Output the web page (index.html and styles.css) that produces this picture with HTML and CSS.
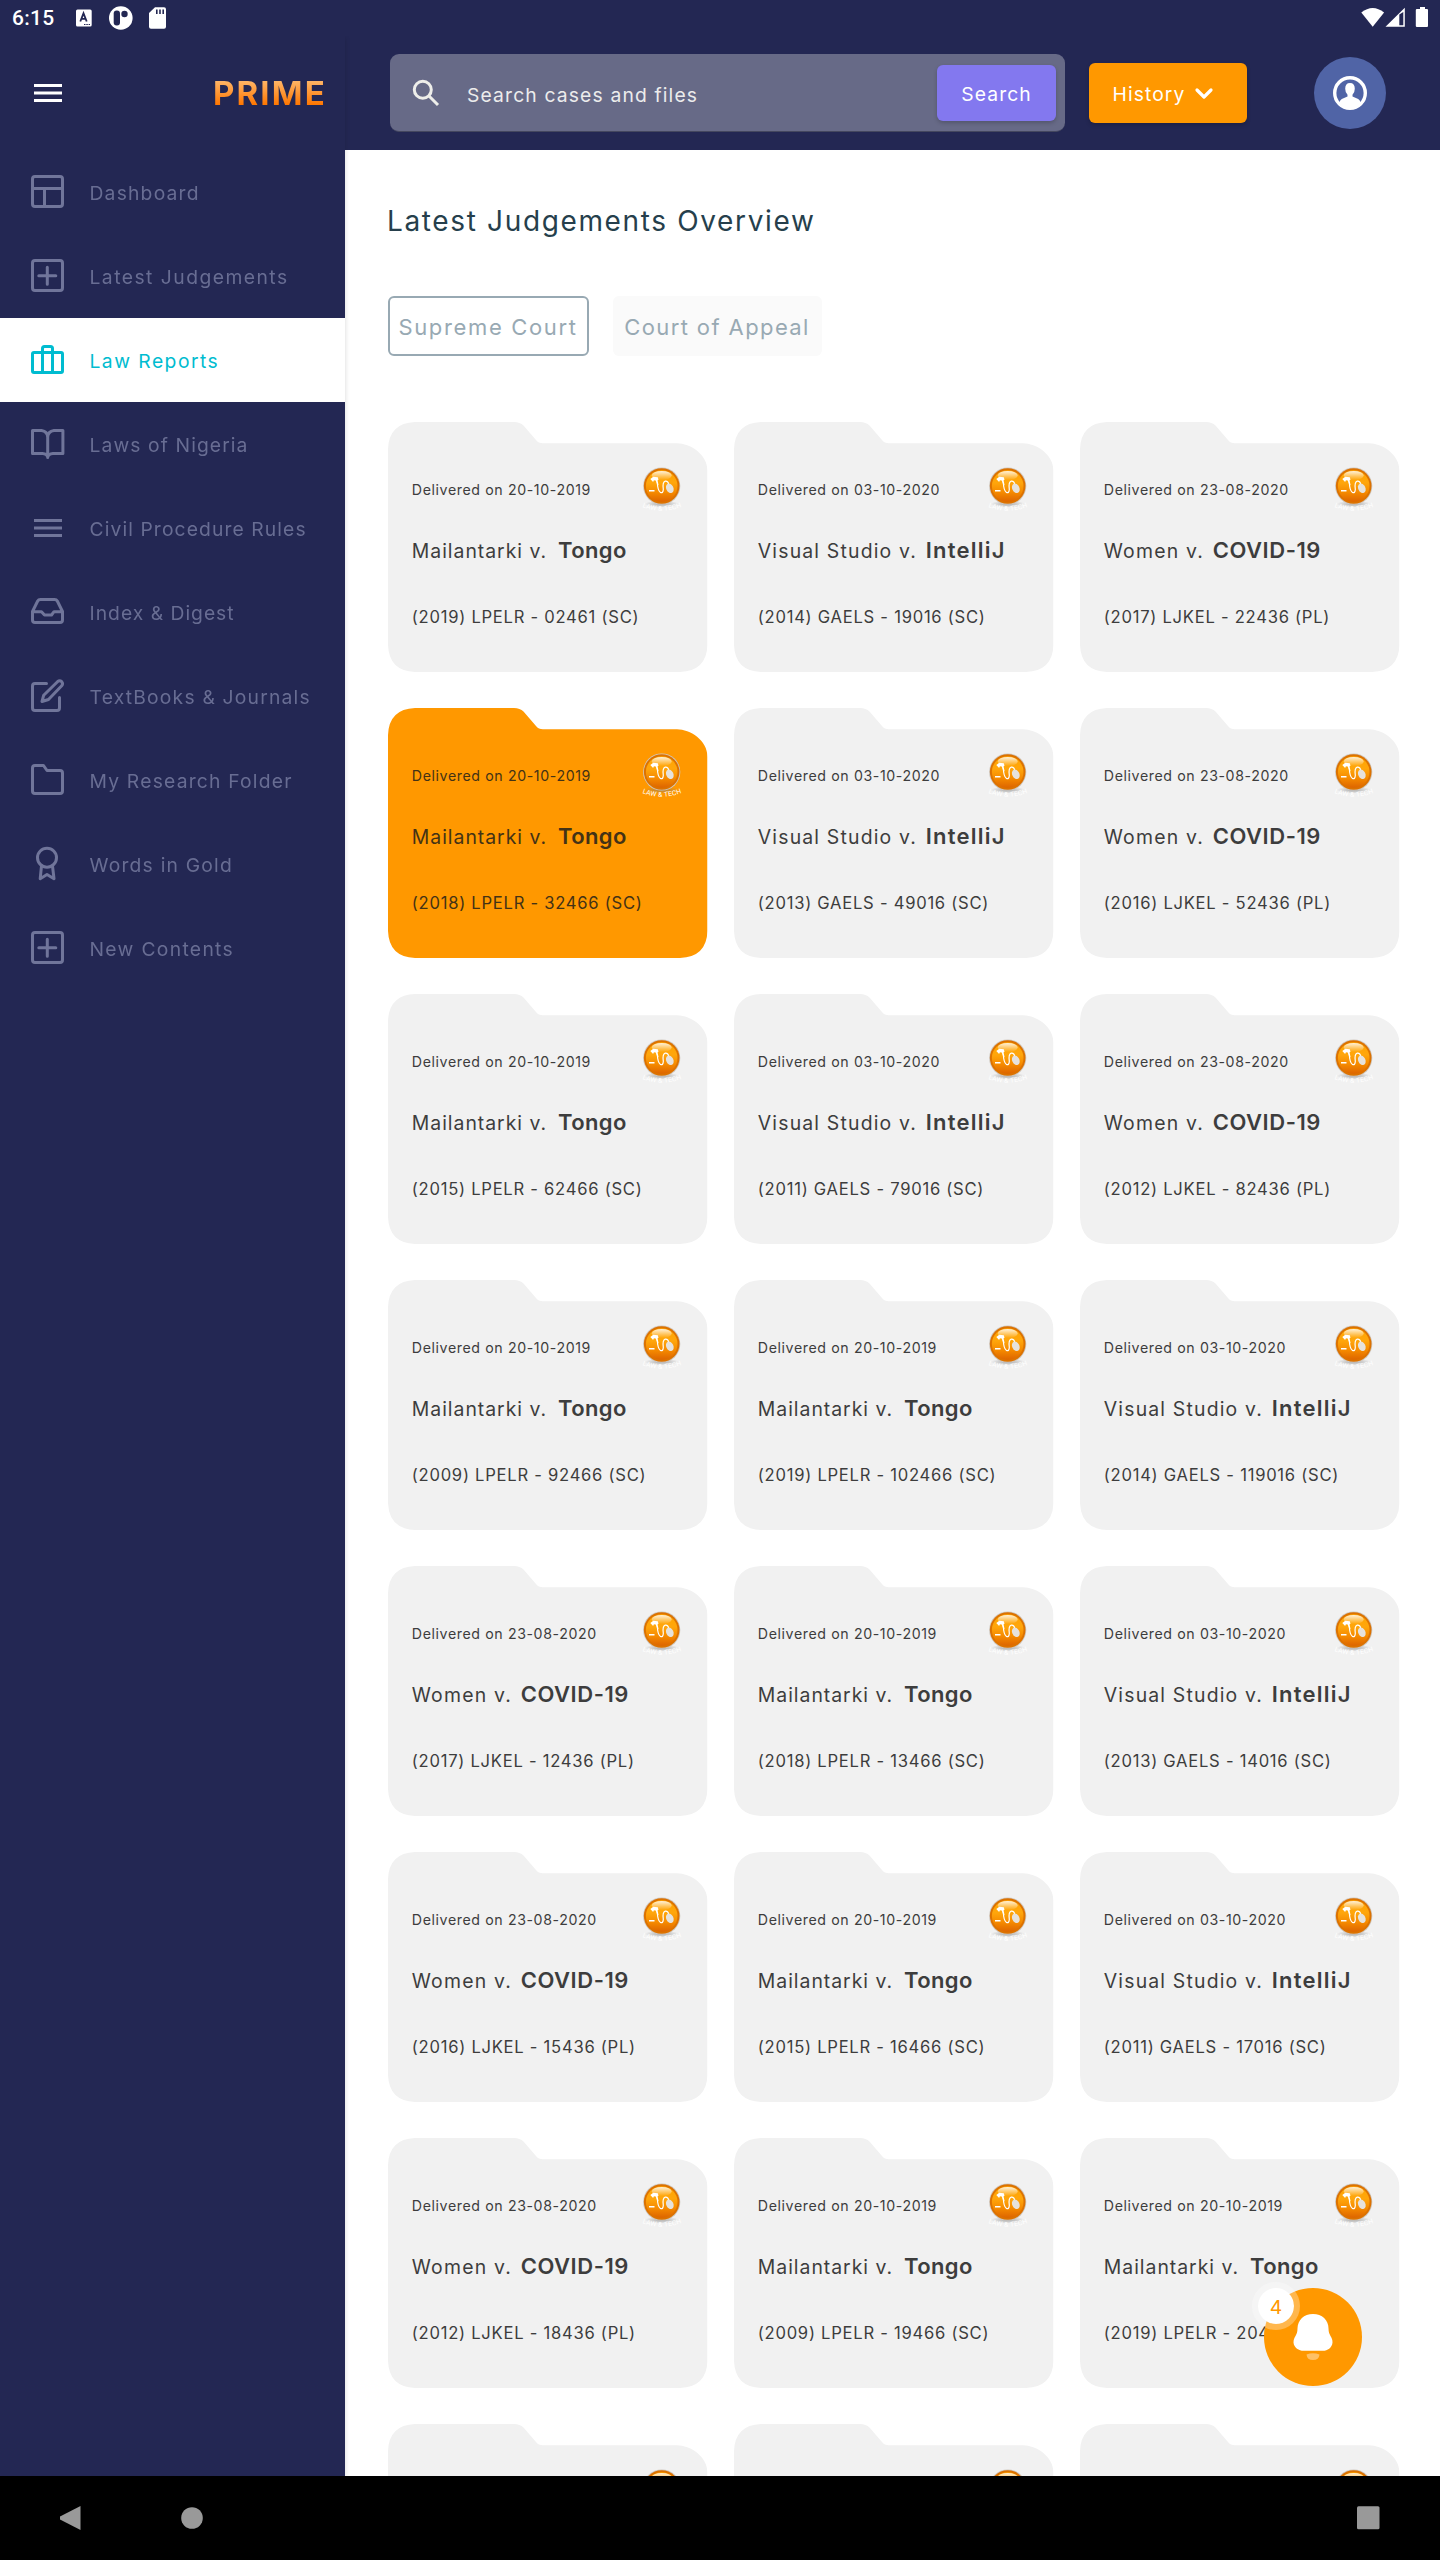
FILE: index.html
```html
<!DOCTYPE html>
<html lang="en">
<head>
<meta charset="utf-8">
<title>Prime – Law Reports</title>
<link rel="stylesheet" href="styles.css">
</head>
<body>
<svg class="defs" width="0" height="0" aria-hidden="true">
  <defs>
    <linearGradient id="orb" x1="0" y1="0" x2="0" y2="1">
      <stop offset="0" stop-color="#ffa500"/><stop offset=".4" stop-color="#ffa60c"/><stop offset=".7" stop-color="#f58a00"/><stop offset="1" stop-color="#dd6500"/>
    </linearGradient>
    <linearGradient id="gloss" x1="0" y1="0" x2="0" y2="1">
      <stop offset="0" stop-color="#fff" stop-opacity=".85"/><stop offset="1" stop-color="#fff" stop-opacity="0"/>
    </linearGradient>
    <radialGradient id="shade"><stop offset="0" stop-color="#777" stop-opacity=".6"/><stop offset="1" stop-color="#777" stop-opacity="0"/></radialGradient>
    <path id="arc" d="M1 40.5Q21.7 49 43 40.5"/>
  </defs>
  <symbol id="folder" viewBox="0 0 319.5 250">
    <path d="M27 0H126Q132 0 135.500 3.500L148 18Q150.500 21.300 155 21.300H289C302 21.500 319.500 32 319.500 49V223Q318.500 249 292 250H27Q1 249 0 223V27Q1 1 27 0Z"/>
  </symbol>
  <symbol id="logo" viewBox="0 0 44 48">
    <ellipse cx="21.700" cy="38" rx="17" ry="3.500" fill="url(#shade)"/>
    <circle cx="21.700" cy="20" r="18.600" fill="#cfc8c0"/>
    <circle cx="21.700" cy="20" r="17.800" fill="#dc7200"/>
    <circle cx="21.700" cy="20" r="15.800" fill="url(#orb)"/>
    <ellipse cx="21.700" cy="9.500" rx="10" ry="4.500" fill="url(#gloss)"/>
    <path d="M10.300 13l3-2.300 4.500.5.700 2.500-2.200 1.500-1.200-1-1.300.3-.7 1.500zM9 24h5.500v1.600H9zM15.500 14l2 0 1 5-1 .5z" fill="#fff"/>
    <path d="M17.300 16q.3 8.500 3.200 10.500 2.500 1 2.800-3-1-7.500 1.900-8.300 3-.3 3.600 3.500" fill="none" stroke="#fff" stroke-width="1.200"/>
    <ellipse cx="29.800" cy="22.300" rx="3.600" ry="5" transform="rotate(-25 29.800 22.300)" fill="#e6e2dc"/>
    <text class="logo-text"><textPath href="#arc" startOffset="50%" text-anchor="middle">LAW &amp; TECH</textPath></text>
  </symbol>
  <symbol id="plus" viewBox="0 0 40 40"><rect x="5.500" y="4.500" width="30" height="30" rx="2.500"/><path d="M11.800 19.700h17M20.300 11.200v17"/></symbol>
</svg>

<div class="status">
  <span class="clock">6:15</span>
  <svg class="status-left" width="96" height="36" viewBox="73 0 96 36">
    <rect x="76" y="9.500" width="15.700" height="17" rx="1.500" fill="#fff"/>
    <path d="M80.300 21.500l3.200-8.200 3.200 8.200M81.500 18.800h4" fill="none" stroke="#232753" stroke-width="1.800"/>
    <path d="M84 24.500h6" stroke="#232753" stroke-width="1.200" stroke-dasharray="1.500 .8"/>
    <circle cx="120.800" cy="18" r="11.800" fill="#fff"/>
    <rect x="113.700" y="10.500" width="6.300" height="15" rx="3" fill="#232753"/><circle cx="124.500" cy="14" r="3.200" fill="#232753"/>
    <path d="M155 7.300h9q2 0 2 2v17.500q0 2-2 2h-13q-2 0-2-2V13z" fill="#fff"/>
    <path d="M156.800 9.500v4.500M160 9.500v4.500M163.200 9.500v4.500" stroke="#232753" stroke-width="1.600"/>
  </svg>
  <svg class="status-right" width="70" height="36" viewBox="1360 0 70 36" fill="#fff">
    <path d="M1372.700 26.700l-11.400-14.200q11.400-9 22.800 0z"/>
    <path d="M1385.500 26.800l19.300-19v19zM1399.300 14.500v10.800h4V12z" fill-rule="evenodd"/>
    <path d="M1417 9h3V7h5v2h2q1 0 1 1v16q0 1-1 1h-10q-1.200 0-1.200-1V10q0-1 1.200-1z"/>
  </svg>
</div>

<div class="app">
  <aside class="sidebar">
    <div class="brand">
      <svg class="icon" viewBox="0 0 40 40"><path d="M7 12.500h28M7 20h28M7 27.500h28"/></svg>
      <span class="wordmark">PRIME</span>
    </div>
    <nav>
      <a class="item"><svg class="icon" viewBox="0 0 40 40"><rect x="5.500" y="4.500" width="30" height="30" rx="2.500"/><path d="M5.500 16.500h30M17.500 16.500v18"/></svg><span>Dashboard</span></a>
      <a class="item loose"><svg class="icon"><use href="#plus"/></svg><span>Latest Judgements</span></a>
      <a class="item loose active"><svg class="icon" viewBox="0 0 40 40"><rect x="5.500" y="12.500" width="30" height="20" rx="1.500"/><path d="M15.500 32V8.500q0-2 2-2h6q2 0 2 2V32"/></svg><span>Law Reports</span></a>
      <a class="item snug"><svg class="icon" viewBox="0 0 40 40"><path d="M20.700 13v20.500M5.500 6.500h9q6 1 6.200 6.500.2-5.500 6.200-6.500h9v23h-10q-4.500.3-5.200 3.500-.7-3.200-5.200-3.500h-10z"/></svg><span>Laws of Nigeria</span></a>
      <a class="item snug"><svg class="icon" viewBox="0 0 40 40"><path stroke-linecap="butt" d="M7 12.500h28M7 20h28M7 27.500h28"/></svg><span>Civil Procedure Rules</span></a>
      <a class="item tight"><svg class="icon" viewBox="0 0 40 40"><path d="M35.500 19.700h-8.500l-2.500 3.300h-7l-3-3.300h-9M13.500 7.500h14q2 0 2.800 1.500l5.200 10.500v8.500q0 2.500-2.500 2.500h-25q-2.500 0-2.500-2.500v-8.500l5.200-10.500q.8-1.500 2.800-1.500z"/></svg><span>Index &amp; Digest</span></a>
      <a class="item"><svg class="icon" viewBox="0 0 40 40"><path d="M19.500 7.500H8q-2.500 0-2.500 2.500v22q0 2.500 2.500 2.500h22q2.500 0 2.500-2.500V21.500M30.500 5.700q2.200-1.900 4.200 0 1.700 2 0 4.100L21.500 23.500l-6.500 2 1.700-6.300z"/></svg><span>TextBooks &amp; Journals</span></a>
      <a class="item"><svg class="icon" viewBox="0 0 40 40"><path d="M8 5.500h8.500l3.500 5h13q2.500 0 2.500 2.500v18q0 2.500-2.500 2.500H8q-2.500 0-2.500-2.500V8q0-2.500 2.500-2.500z"/></svg><span>My Research Folder</span></a>
      <a class="item"><svg class="icon" viewBox="0 0 40 40"><circle cx="20" cy="13.700" r="9.500"/><path d="M14.500 22l-1.300 12.700 6.800-4.200 7 4.200L25.500 22"/></svg><span>Words in Gold</span></a>
      <a class="item mid"><svg class="icon"><use href="#plus"/></svg><span>New Contents</span></a>
    </nav>
  </aside>

  <div class="main">
    <header class="topbar">
      <div class="search">
        <svg width="28" height="28" viewBox="0 0 28 28" fill="none" stroke="#eeeeea" stroke-width="3"><circle cx="10.800" cy="10.800" r="8.500"/><path d="M16.500 16.500l9.500 9.500"/></svg>
        <span class="placeholder">Search cases and files</span>
        <button class="btn search-btn">Search</button>
      </div>
      <button class="btn history">History
        <svg width="20" height="14" viewBox="0 0 20 14" fill="none" stroke="#fff" stroke-width="3.200" stroke-linecap="round" stroke-linejoin="round"><path d="M3 3l7 7 7-7"/></svg>
      </button>
      <div class="avatar">
        <svg width="34" height="34" viewBox="0 0 34 34"><circle cx="17" cy="17" r="15.300" fill="none" stroke="#fff" stroke-width="3.400"/><path d="M12.200 12.800q0-5.800 4.800-5.800t4.800 5.800q0 3.700-2.300 6v1.700l5.700 2.500q2 1 2.300 3.500Q23 32 17 32T6.500 26.500q.3-2.500 2.300-3.500l5.700-2.500v-1.700q-2.300-2.300-2.300-6z" fill="#fff"/></svg>
      </div>
    </header>

    <main class="content">
      <h1>Latest Judgements Overview</h1>
      <div class="tabs"><span class="tab current">Supreme Court</span><span class="tab appeal">Court of Appeal</span></div>
      <div class="cards">
        <article class="card tongo"><svg class="shape"><use href="#folder"/></svg><div class="head"><time>Delivered on 20-10-2019</time><svg class="logo"><use href="#logo"/></svg></div><h2>Mailantarki v. <b>Tongo</b></h2><p>(2019) LPELR - 02461 (SC)</p></article>
        <article class="card studio"><svg class="shape"><use href="#folder"/></svg><div class="head"><time>Delivered on 03-10-2020</time><svg class="logo"><use href="#logo"/></svg></div><h2>Visual Studio v. <b>IntelliJ</b></h2><p>(2014) GAELS - 19016 (SC)</p></article>
        <article class="card covid"><svg class="shape"><use href="#folder"/></svg><div class="head"><time>Delivered on 23-08-2020</time><svg class="logo"><use href="#logo"/></svg></div><h2>Women v. <b>COVID-19</b></h2><p>(2017) LJKEL - 22436 (PL)</p></article>

        <article class="card tongo selected"><svg class="shape"><use href="#folder"/></svg><div class="head"><time>Delivered on 20-10-2019</time><svg class="logo"><use href="#logo"/></svg></div><h2>Mailantarki v. <b>Tongo</b></h2><p>(2018) LPELR - 32466 (SC)</p></article>
        <article class="card studio"><svg class="shape"><use href="#folder"/></svg><div class="head"><time>Delivered on 03-10-2020</time><svg class="logo"><use href="#logo"/></svg></div><h2>Visual Studio v. <b>IntelliJ</b></h2><p>(2013) GAELS - 49016 (SC)</p></article>
        <article class="card covid"><svg class="shape"><use href="#folder"/></svg><div class="head"><time>Delivered on 23-08-2020</time><svg class="logo"><use href="#logo"/></svg></div><h2>Women v. <b>COVID-19</b></h2><p>(2016) LJKEL - 52436 (PL)</p></article>

        <article class="card tongo"><svg class="shape"><use href="#folder"/></svg><div class="head"><time>Delivered on 20-10-2019</time><svg class="logo"><use href="#logo"/></svg></div><h2>Mailantarki v. <b>Tongo</b></h2><p>(2015) LPELR - 62466 (SC)</p></article>
        <article class="card studio"><svg class="shape"><use href="#folder"/></svg><div class="head"><time>Delivered on 03-10-2020</time><svg class="logo"><use href="#logo"/></svg></div><h2>Visual Studio v. <b>IntelliJ</b></h2><p>(2011) GAELS - 79016 (SC)</p></article>
        <article class="card covid"><svg class="shape"><use href="#folder"/></svg><div class="head"><time>Delivered on 23-08-2020</time><svg class="logo"><use href="#logo"/></svg></div><h2>Women v. <b>COVID-19</b></h2><p>(2012) LJKEL - 82436 (PL)</p></article>

        <article class="card tongo"><svg class="shape"><use href="#folder"/></svg><div class="head"><time>Delivered on 20-10-2019</time><svg class="logo"><use href="#logo"/></svg></div><h2>Mailantarki v. <b>Tongo</b></h2><p>(2009) LPELR - 92466 (SC)</p></article>
        <article class="card tongo"><svg class="shape"><use href="#folder"/></svg><div class="head"><time>Delivered on 20-10-2019</time><svg class="logo"><use href="#logo"/></svg></div><h2>Mailantarki v. <b>Tongo</b></h2><p>(2019) LPELR - 102466 (SC)</p></article>
        <article class="card studio"><svg class="shape"><use href="#folder"/></svg><div class="head"><time>Delivered on 03-10-2020</time><svg class="logo"><use href="#logo"/></svg></div><h2>Visual Studio v. <b>IntelliJ</b></h2><p>(2014) GAELS - 119016 (SC)</p></article>

        <article class="card covid"><svg class="shape"><use href="#folder"/></svg><div class="head"><time>Delivered on 23-08-2020</time><svg class="logo"><use href="#logo"/></svg></div><h2>Women v. <b>COVID-19</b></h2><p>(2017) LJKEL - 12436 (PL)</p></article>
        <article class="card tongo"><svg class="shape"><use href="#folder"/></svg><div class="head"><time>Delivered on 20-10-2019</time><svg class="logo"><use href="#logo"/></svg></div><h2>Mailantarki v. <b>Tongo</b></h2><p>(2018) LPELR - 13466 (SC)</p></article>
        <article class="card studio"><svg class="shape"><use href="#folder"/></svg><div class="head"><time>Delivered on 03-10-2020</time><svg class="logo"><use href="#logo"/></svg></div><h2>Visual Studio v. <b>IntelliJ</b></h2><p>(2013) GAELS - 14016 (SC)</p></article>

        <article class="card covid"><svg class="shape"><use href="#folder"/></svg><div class="head"><time>Delivered on 23-08-2020</time><svg class="logo"><use href="#logo"/></svg></div><h2>Women v. <b>COVID-19</b></h2><p>(2016) LJKEL - 15436 (PL)</p></article>
        <article class="card tongo"><svg class="shape"><use href="#folder"/></svg><div class="head"><time>Delivered on 20-10-2019</time><svg class="logo"><use href="#logo"/></svg></div><h2>Mailantarki v. <b>Tongo</b></h2><p>(2015) LPELR - 16466 (SC)</p></article>
        <article class="card studio"><svg class="shape"><use href="#folder"/></svg><div class="head"><time>Delivered on 03-10-2020</time><svg class="logo"><use href="#logo"/></svg></div><h2>Visual Studio v. <b>IntelliJ</b></h2><p>(2011) GAELS - 17016 (SC)</p></article>

        <article class="card covid"><svg class="shape"><use href="#folder"/></svg><div class="head"><time>Delivered on 23-08-2020</time><svg class="logo"><use href="#logo"/></svg></div><h2>Women v. <b>COVID-19</b></h2><p>(2012) LJKEL - 18436 (PL)</p></article>
        <article class="card tongo"><svg class="shape"><use href="#folder"/></svg><div class="head"><time>Delivered on 20-10-2019</time><svg class="logo"><use href="#logo"/></svg></div><h2>Mailantarki v. <b>Tongo</b></h2><p>(2009) LPELR - 19466 (SC)</p></article>
        <article class="card tongo"><svg class="shape"><use href="#folder"/></svg><div class="head"><time>Delivered on 20-10-2019</time><svg class="logo"><use href="#logo"/></svg></div><h2>Mailantarki v. <b>Tongo</b></h2><p>(2019) LPELR - 204</p></article>

        <article class="card"><svg class="shape"><use href="#folder"/></svg><div class="head"><time></time><svg class="logo"><use href="#logo"/></svg></div></article>
        <article class="card"><svg class="shape"><use href="#folder"/></svg><div class="head"><time></time><svg class="logo"><use href="#logo"/></svg></div></article>
        <article class="card"><svg class="shape"><use href="#folder"/></svg><div class="head"><time></time><svg class="logo"><use href="#logo"/></svg></div></article>
      </div>
    </main>
  </div>

  <div class="fab">
    <svg width="40" height="48" viewBox="0 0 40 48"><path d="M20 0C29 0 35.500 6 35.500 14.500 35.500 22 39.500 22 39.500 28.500 39 34 34.500 36.800 30 36.800H10.500C6 36.800 1 34 .5 28.500.5 22 4.500 22 4.500 14.500 4.500 6 11 0 20 0Z" fill="#fff"/><path d="M13.500 40.500Q20 38 26.500 40.500 26 46 20 46T13.500 40.500Z" fill="#ffc166"/></svg>
    <span class="badge">4</span>
  </div>
</div>

<div class="sysnav">
  <svg width="24" height="26" viewBox="0 0 24 26"><path d="M21.500 1v24L1 14.500v-3z"/></svg>
  <svg class="home" width="24" height="26" viewBox="0 0 24 26"><circle cx="12" cy="13" r="10.800"/></svg>
  <svg width="24" height="26" viewBox="0 0 24 26"><rect x="1" y="1.300" width="22.500" height="23" rx="1.500"/></svg>
</div>
</body>
</html>
```
FILE: styles.css
```css
* { box-sizing: border-box; }
body {
  margin: 0;
  width: 1440px;
  height: 2560px;
  display: flex;
  flex-direction: column;
  overflow: hidden;
  background: #fff;
  font-family: Inter, "Open Sans", sans-serif;
  font-weight: 400;
}
.defs { position: absolute; }
.status {
  height: 36px;
  flex: none;
  display: flex;
  align-items: center;
  padding: 0 10px 0 12px;
  background: #232753;
  color: #fff;
}
.clock { width: 61px; font: 500 21px/36px Roboto, sans-serif; letter-spacing: .3px; }
.status-right { margin-left: auto; }

.app { position: relative; display: flex; height: 2440px; overflow: hidden; }
.sidebar {
  position: relative;
  width: 345px;
  flex: none;
  background: #232753;
  box-shadow: 0 2px 5px rgba(0, 0, 0, .16);
}
.brand {
  height: 114px;
  display: flex;
  align-items: center;
  justify-content: space-between;
  padding: 0 18px 0 27px;
  color: #fff;
}
.wordmark {
  font-size: 33px;
  font-weight: 750;
  line-height: 40px;
  letter-spacing: 2.200px;
  background: linear-gradient(#ffb566 20%, #ff7600 80%);
  -webkit-background-clip: text;
  background-clip: text;
  color: transparent;
}
.icon {
  width: 40px;
  height: 40px;
  flex: none;
  fill: none;
  stroke: currentColor;
  stroke-width: 3;
  stroke-linejoin: round;
  stroke-linecap: round;
}
.brand .icon { stroke-linecap: butt; }
.item {
  display: flex;
  align-items: center;
  height: 84px;
  padding-left: 27px;
  gap: 22.500px;
  font-size: 19.300px;
  letter-spacing: 1.200px;
  color: #70759a;
}
.item span { padding-top: 2px; opacity: .9; white-space: nowrap; }
.item.loose { letter-spacing: 1.470px; }
.item.mid { letter-spacing: 1.320px; }
.item.snug { letter-spacing: 1.100px; }
.item.tight { letter-spacing: 1px; }
.item.active { background: #fff; color: #00bcd0; }
.item.active span { opacity: 1; }

.main { flex: 1; display: flex; flex-direction: column; min-width: 0; }
.topbar {
  height: 114px;
  flex: none;
  display: flex;
  align-items: center;
  padding: 0 54px 0 45px;
  background: #232753;
}
.search {
  width: 675px;
  height: 78px;
  display: flex;
  align-items: center;
  padding: 0 9px 0 22px;
  border-radius: 9px;
  border-bottom: 1px solid #44475f;
  background: #676a87;
}
.placeholder { flex: 1; margin-left: 26px; padding: 4px 0 0 1px; font-size: 19.300px; letter-spacing: 1.150px; color: #ececec; }
.btn {
  border: 0;
  padding: 2px 0 0;
  color: #fff;
  font: 400 19.300px Inter, sans-serif;
  letter-spacing: 1.100px;
  border-radius: 6px;
  box-shadow: 0 2px 4px rgba(0, 0, 0, .2);
}
.search-btn { width: 119px; height: 56px; background: #8378ef; }
.history {
  width: 158px;
  height: 60px;
  margin-left: 24px;
  display: flex;
  align-items: center;
  padding-left: 23.500px;
  gap: 9px;
  background: #ff9800;
}
.avatar {
  width: 72px;
  height: 72px;
  margin-left: auto;
  display: flex;
  align-items: center;
  justify-content: center;
  border-radius: 50%;
  background: #5064a6;
}

.content { padding: 49px 0 0 43px; }
h1 {
  margin: 0 0 0 -1px;
  font-size: 28px;
  font-weight: 400;
  line-height: 44px;
  letter-spacing: 1.640px;
  color: #263f4c;
}
.tabs { display: flex; gap: 24px; margin: 53px 0 0 -.500px; }
.tab {
  height: 60px;
  padding-top: 1px;
  line-height: 60px;
  font-size: 22px;
  letter-spacing: 1.650px;
  text-align: center;
  border-radius: 6px;
  color: #98a9b3;
}
.tab.current { width: 201px; line-height: 56px; border: 2px solid #98a9b3; }
.tab.appeal { width: 209px; letter-spacing: 1.400px; background: #fafafa; }

.cards {
  display: grid;
  grid-template-columns: repeat(3, 319.500px);
  grid-auto-rows: 250px;
  gap: 36px 26.500px;
  margin-top: 66px;
}
.card { position: relative; padding: 44px 0 0 23.800px; color: #3d3d3d; }
.shape { position: absolute; inset: 0; width: 319.500px; height: 250px; fill: #f1f1f1; }
.card.selected .shape { fill: #ff9800; }
.card.selected { color: #433216; }
.head, .card h2, .card p { position: relative; }
.head { display: flex; justify-content: space-between; padding-right: 23.500px; height: 46px; }
.head time { padding-top: 14px; font-size: 14.200px; line-height: 20px; letter-spacing: .600px; white-space: nowrap; }
.logo { width: 44px; height: 48px; flex: none; overflow: visible; }
.logo-text { font: 400 6.800px Roboto, sans-serif; fill: #fff; letter-spacing: .2px; }
.card h2 {
  margin: 23px 0 0;
  font-size: 19.400px;
  font-weight: 400;
  line-height: 30px;
  height: 30px;
  white-space: nowrap;
}
.card b { font-size: 22px; font-weight: 600; margin-left: 2px; }
.card.tongo h2 { letter-spacing: .980px; }
.card.tongo b { letter-spacing: .400px; margin-left: 4.500px; }
.card.studio h2 { letter-spacing: 1.180px; }
.card.studio b { letter-spacing: 1.250px; }
.card.covid h2 { letter-spacing: 1.200px; }
.card.covid b { letter-spacing: .550px; }
.card p { margin: 40px 0 0; font-size: 16.600px; line-height: 24px; letter-spacing: .740px; white-space: nowrap; }

.fab {
  position: absolute;
  left: 1264px;
  top: 2252px;
  width: 98px;
  height: 98px;
  display: flex;
  justify-content: center;
  padding-top: 26px;
  border-radius: 50%;
  background: #ff9800;
}
.badge {
  position: absolute;
  left: -12px;
  top: -6px;
  width: 48px;
  height: 48px;
  border: 6px solid rgba(255, 255, 255, .3);
  border-radius: 50%;
  background: #fff;
  background-clip: padding-box;
  color: #ff9800;
  font-size: 19.300px;
  line-height: 38px;
  text-align: center;
}
.sysnav {
  height: 84px;
  flex: none;
  display: flex;
  align-items: center;
  padding: 0 60px 0 59px;
  background: #000;
  fill: #999;
}
.home { margin: 0 auto 0 97px; }
```
